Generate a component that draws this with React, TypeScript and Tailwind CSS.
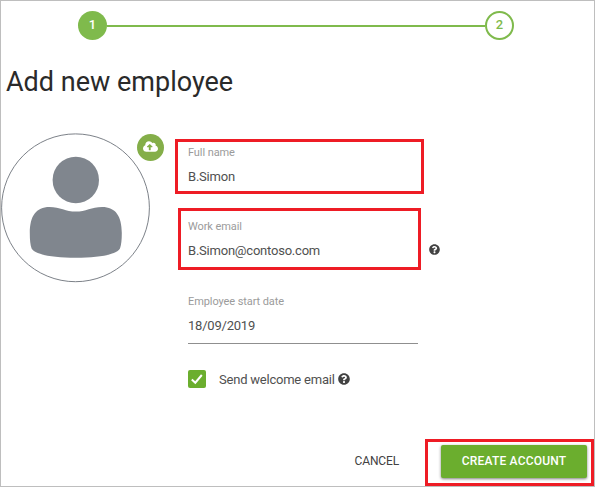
import React from "react";
import { FaCloudUploadAlt, FaQuestionCircle } from "react-icons/fa";

function Stepper() {
  return (
    <div className="mt-[10px] ml-[77px] flex h-[29px] w-[436px] items-center">
      <div className="flex size-[29px] items-center justify-center rounded-full bg-[#7fba4c] pb-[2px] text-[13px] leading-none font-medium text-white">
        1
      </div>
      <div className="mt-[1px] h-[2px] flex-1 bg-[#7fba4c]" />
      <div className="flex size-[29px] items-center justify-center rounded-full border-2 border-[#7fba4c] pb-[2px] text-[13px] leading-none font-medium text-[#7fba4c]">
        2
      </div>
    </div>
  );
}

function Avatar() {
  return (
    <svg className="block h-[150px] w-[150px] shrink-0" viewBox="0 0 150 150">
      <circle cx="74.5" cy="74.8" r="73.9" fill="none" stroke="#6d737b" strokeWidth="0.9" />
      <circle cx="74.8" cy="47" r="23.2" fill="#80868e" />
      <path
        d="M28.8 100 C28.8 83 35 73.900 48.5 73.900 C59 73.900 65 78.5 74.8 78.5 C84.600 78.5 90.600 73.900 101.100 73.900 C114.600 73.900 120.800 83 120.800 100 C120.800 107 120.300 112 119 115.500 C115.500 121.500 98 124.800 74.8 124.800 C51.600 124.800 34.100 121.500 30.600 115.500 C29.300 112 28.8 107 28.8 100 Z"
        fill="#80868e"
      />
    </svg>
  );
}

function Field({ label, value }: { label: string; value: string }) {
  return (
    <div>
      <div className="text-[11px] leading-[14px] tracking-[-0.09px] text-[#9b9b9b]">{label}</div>
      <div className="mt-[8px] text-[13px] leading-[18px] tracking-[-0.22px] text-[#505050]">{value}</div>
    </div>
  );
}

export default function App() {
  return (
    <div className="flex h-[487px] w-[595px] flex-col overflow-hidden border border-[#bebebe] bg-white font-['Roboto',sans-serif]">
      <Stepper />
      <h1 className="mt-[24px] ml-[5px] h-[36px] text-[27px] leading-[36px] font-normal whitespace-nowrap text-[#2a2a2a]">
        Add new employee
      </h1>

      <div className="mt-[33px] flex h-[306px]">
        <Avatar />
        <div className="mt-[1px] -ml-[14px] flex size-[27px] shrink-0 items-center justify-center rounded-full bg-[#84ae49] text-white">
          <FaCloudUploadAlt className="-mt-[2px] size-[15px]" />
        </div>
        <div className="ml-[11px] flex flex-col">
          <div className="mt-[6px] h-[55px] w-[249px] border-[3px] border-[#ee1c25] pt-[4px] pl-[10px]">
            <Field label="Full name" value="B.Simon" />
          </div>
          <div className="mt-[14px] ml-[3px] flex items-center gap-[8px]">
            <div className="h-[62px] w-[243px] border-[3px] border-[#ee1c25] pt-[9px] pl-[7px]">
              <Field label="Work email" value="B.Simon@contoso.com" />
            </div>
            <FaQuestionCircle className="mt-[21px] size-[11px] text-[#424242]" />
          </div>
          <div className="mt-[25px] ml-[13px] h-[49px] w-[230px] border-b border-[#8f8f8f]">
            <Field label="Employee start date" value="18/09/2019" />
          </div>
          <label className="mt-[26px] ml-[13px] flex h-[18px] items-center text-[13px] text-[#505050]">
            <span className="flex size-[18px] items-center justify-center rounded-[2px] bg-[#6bae2e]">
              <svg className="size-[18px]" viewBox="0 0 18 18" fill="none">
                <path d="M3.8 9.4 L7.3 12.7 L13.8 5" stroke="white" strokeWidth="2" />
              </svg>
            </span>
            <span className="mt-[2px] ml-[13px] tracking-[-0.22px]">Send welcome email</span>
            <FaQuestionCircle className="ml-[3px] size-[12px] text-[#424242]" />
          </label>
        </div>
      </div>

      <div className="flex h-[47px] items-start justify-end">
        <button className="mt-[14px] mr-[26px] text-[12px] leading-[16px] tracking-[-0.15px] text-[#424242]">CANCEL</button>
        <div className="h-[47px] w-[169px] border-[3px] border-[#ee1c25] pt-[3px] pl-[13px]">
          <button className="block h-[33px] w-[146px] rounded-[2px] bg-[#6bae2e] pb-[2px] text-[12px] font-medium tracking-[0.2px] text-white shadow-[0_1px_3px_rgba(0,0,0,0.5)]">
            CREATE ACCOUNT
          </button>
        </div>
      </div>
    </div>
  );
}
